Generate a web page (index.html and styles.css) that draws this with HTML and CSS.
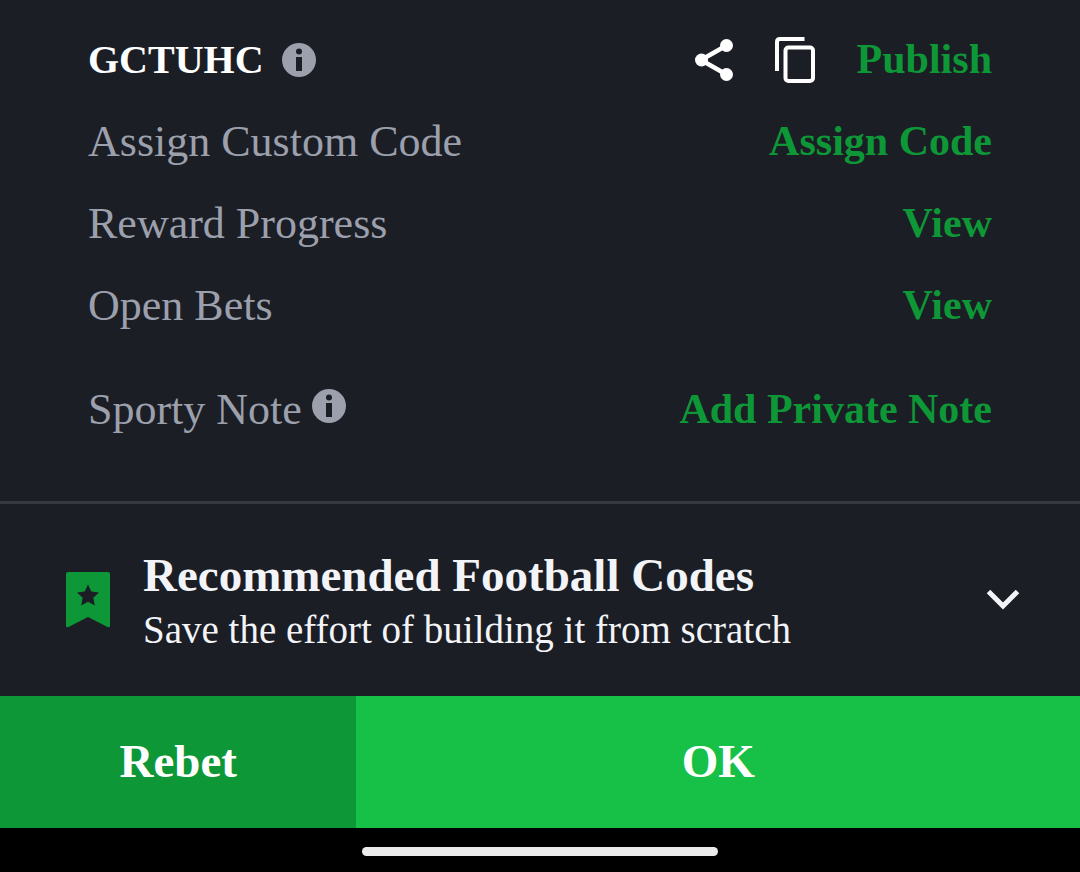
FILE: index.html
```html
<!DOCTYPE html>
<html lang="en">
<head>
    <meta charset="UTF-8">
    <meta name="viewport" content="width=device-width, initial-scale=1.0">
    <title>Booking Code</title>
    <link rel="stylesheet" href="styles.css">
</head>
<body>
    <main class="content">
        <section class="details">
            <div class="row">
                <h1 class="code">GCTUHC</h1>
                <button type="button" class="icon-btn info-btn" aria-label="Code info">
                    <svg class="icon-info" viewBox="0 0 34 34">
                        <circle cx="17" cy="17" r="17" fill="#9CA0AD"/>
                        <circle cx="17" cy="8.500" r="3" fill="#1B1E25"/>
                        <rect x="14" y="14" width="6" height="14" fill="#1B1E25"/>
                    </svg>
                </button>
                <div class="actions">
                    <button type="button" class="icon-btn" aria-label="Share">
                        <svg class="icon-share" viewBox="0 0 38 42">
                            <path d="M31.500 6.500 6 21 31.500 35.500" fill="none" stroke="#FFFFFF" stroke-width="4.500"/>
                            <circle cx="31.500" cy="6.500" r="6.500" fill="#FFFFFF"/>
                            <circle cx="6.500" cy="21" r="6.500" fill="#FFFFFF"/>
                            <circle cx="31.500" cy="35.500" r="6.500" fill="#FFFFFF"/>
                        </svg>
                    </button>
                    <button type="button" class="icon-btn" aria-label="Copy">
                        <svg class="icon-copy" viewBox="0 0 40 48">
                            <path d="M2 35V6Q2 3 5 3H29.500" fill="none" stroke="#FFFFFF" stroke-width="4"/>
                            <rect x="10.500" y="11.500" width="27.500" height="33.500" rx="3" fill="none" stroke="#FFFFFF" stroke-width="4"/>
                        </svg>
                    </button>
                    <a href="#" class="link">Publish</a>
                </div>
            </div>
            <div class="row">
                <span class="label">Assign Custom Code</span>
                <a href="#" class="link">Assign Code</a>
            </div>
            <div class="row">
                <span class="label">Reward Progress</span>
                <a href="#" class="link">View</a>
            </div>
            <div class="row">
                <span class="label">Open Bets</span>
                <a href="#" class="link">View</a>
            </div>
            <div class="row note-row">
                <span class="label">Sporty Note</span>
                <button type="button" class="icon-btn note-info" aria-label="Sporty Note info">
                    <svg class="icon-info" viewBox="0 0 34 34">
                        <circle cx="17" cy="17" r="17" fill="#9CA0AD"/>
                        <circle cx="17" cy="8.500" r="3" fill="#1B1E25"/>
                        <rect x="14" y="14" width="6" height="14" fill="#1B1E25"/>
                    </svg>
                </button>
                <a href="#" class="link">Add Private Note</a>
            </div>
        </section>

        <section class="recommended">
            <svg class="icon-bookmark" viewBox="0 0 44 56">
                <path d="M2 0H42Q44 0 44 2V54Q44 56 41.500 55L22 45 2.500 55Q0 56 0 54V2Q0 0 2 0Z" fill="#0E9737"/>
                <path d="M22 12.500 25.300 19.600 33 20.500 27.300 25.800 28.800 33.500 22 29.700 15.200 33.500 16.700 25.800 11 20.500 18.700 19.600Z" fill="#1B1E25"/>
            </svg>
            <div class="recommended-text">
                <h2>Recommended Football Codes</h2>
                <p>Save the effort of building it from scratch</p>
            </div>
            <button type="button" class="icon-btn" aria-label="Expand">
                <svg class="icon-chevron" viewBox="0 0 34 22">
                    <path d="M2.500 2.500 17 17 31.500 2.500" fill="none" stroke="#F3F4F8" stroke-width="5"/>
                </svg>
            </button>
        </section>
    </main>

    <footer class="footer">
        <button type="button" class="btn btn-rebet">Rebet</button>
        <button type="button" class="btn btn-ok">OK</button>
    </footer>
    <div class="nav-bar">
        <div class="nav-handle"></div>
    </div>
</body>
</html>
```

FILE: styles.css
```css
:root {
    --color-bg: #1B1E25;
    --color-line: #353840;
    --color-muted: #9CA0AD;
    --color-text: #F3F4F8;
    --color-green: #0E9737;
    --color-green-light: #17C047;
}

* {
    margin: 0;
    padding: 0;
    box-sizing: border-box;
}

body {
    display: flex;
    flex-direction: column;
    min-height: 100vh;
    background-color: var(--color-bg);
    color: var(--color-text);
    font-family: 'Liberation Serif', 'Times New Roman', serif;
}

button {
    border: none;
    background: none;
    color: inherit;
    font-family: inherit;
    cursor: pointer;
}

svg {
    display: block;
    flex-shrink: 0;
}

.content {
    flex: 1;
}

.details {
    padding: 19px 88px 50px;
    border-bottom: 3px solid var(--color-line);
}

.row {
    display: flex;
    align-items: center;
    height: 82px;
}

.note-row {
    margin-top: 22px;
}

.code,
.label,
.link {
    padding-bottom: 2px;
}

.code {
    color: #FFFFFF;
    font-size: 40px;
    font-weight: 700;
}

.label {
    color: var(--color-muted);
    font-size: 44px;
}

.link {
    margin-left: auto;
    color: var(--color-green);
    font-size: 42px;
    font-weight: 700;
    text-decoration: none;
}

.info-btn {
    margin-left: 18px;
}

.note-info {
    margin-left: 10px;
    padding-bottom: 8px;
}

.actions {
    display: flex;
    align-items: center;
    gap: 42px;
    margin-left: auto;
}

.icon-info {
    width: 34px;
    height: 34px;
}

.icon-share {
    width: 38px;
    height: 42px;
}

.icon-copy {
    width: 40px;
    height: 48px;
}

.recommended {
    display: flex;
    align-items: center;
    gap: 33px;
    padding: 41px 60px 41px 66px;
}

.icon-bookmark {
    width: 44px;
    height: 56px;
}

.icon-chevron {
    width: 34px;
    height: 22px;
}

.recommended-text {
    flex: 1;
}

.recommended-text h2 {
    font-size: 47px;
    line-height: 60px;
}

.recommended-text p {
    font-size: 39px;
    line-height: 50px;
}

.footer {
    display: flex;
    height: 132px;
}

.btn {
    padding-bottom: 2px;
    color: #FFFFFF;
    font-size: 47px;
    font-weight: 700;
}

.btn-rebet {
    width: 33%;
    background-color: var(--color-green);
}

.btn-ok {
    flex: 1;
    background-color: var(--color-green-light);
}

.nav-bar {
    display: flex;
    align-items: center;
    justify-content: center;
    height: 44px;
    padding-top: 3px;
    background-color: #000000;
}

.nav-handle {
    width: 33%;
    height: 9px;
    border-radius: 5px;
    background-color: #EBEBEB;
}
```
